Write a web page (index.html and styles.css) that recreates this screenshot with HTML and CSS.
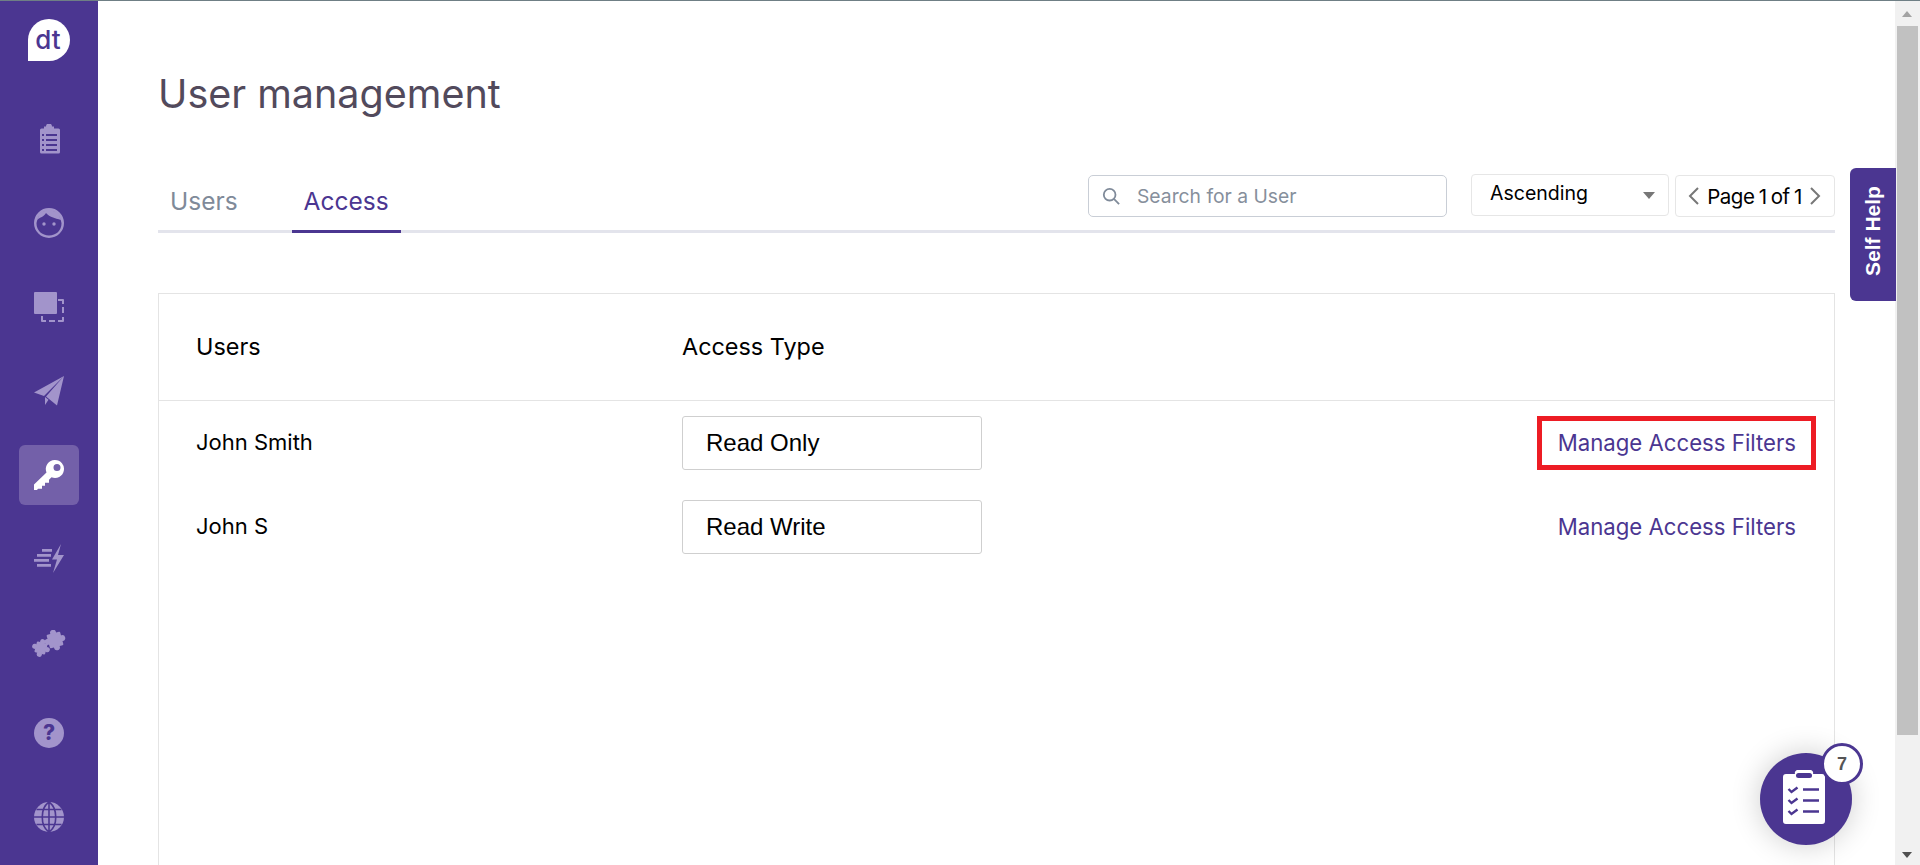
FILE: index.html
```html
<!DOCTYPE html>
<html lang="en">
<head>
<meta charset="utf-8">
<title>User management</title>
<link rel="stylesheet" href="styles.css">
</head>
<body>
<div class="app">
  <nav class="sidebar">
    <div class="logo"><span>dt</span></div>
    <a class="nav-item"><svg class="ico" viewBox="0 0 30 30"><path d="M12 2.500a3 3 0 0 1 6 0h2v2h4.500a1.500 1.500 0 0 1 1.500 1.500v22a1.500 1.500 0 0 1-1.500 1.500h-17a1.500 1.500 0 0 1-1.500-1.500V6a1.500 1.500 0 0 1 1.500-1.500H10v-2z"/><path class="cut" d="M8 10h2v2H8zM12 10h11v2H12zM8 15h2v2H8zM12 15h11v2H12zM8 20h2v2H8zM12 20h11v2H12zM8 25h2v2H8zM12 25h11v2H12z"/></svg></a>
    <a class="nav-item"><svg class="ico" viewBox="0 0 30 30"><path fill-rule="evenodd" d="M15 0a15 15 0 1 1 0 30a15 15 0 0 1 0-30zM15 2.500C9.500 2.500 5 6.500 3.500 11.500c-.5 1.500-1 3-1 4C2.500 22.500 8 27.500 15 27.500S27.500 22.500 27.500 15.500c0-1-.5-2.500-1-4C25 6.500 20.500 2.500 15 2.500z"/><path d="M3 12C6 9 10 9 12 5c3 4 9 5 15 7L24 5 15 1 6 5z"/><circle cx="10" cy="16" r="1.700"/><circle cx="20" cy="16" r="1.700"/></svg></a>
    <a class="nav-item"><svg class="ico" viewBox="0 0 30 30"><rect x="0" y="0" width="23" height="22" rx="1"/><path d="M24 7h5a1 1 0 0 1 1 1v4h-2V9h-4zM28 15h2v6h-2zM7 24h2v4h3v2H8a1 1 0 0 1-1-1zM15 28h6v2h-6zM24 28h4v-3h2v4a1 1 0 0 1-1 1h-5z"/></svg></a>
    <a class="nav-item"><svg class="ico" viewBox="0 0 30 30"><path d="M30 0 0 16.500l10 3.500zM30 0 12 20.500l11 9zM11 21l0 8 3.500-5.200z"/></svg></a>
    <a class="nav-item active"><svg class="ico key" viewBox="0 0 30 30"><path fill-rule="evenodd" d="M21 0a9 9 0 1 1-3.500 17.300L15 19.800v3h-4v3H8v3H4l-1 1.200L0 30v-5.500l12.500-12A9 9 0 0 1 21 0zM23 4a3.500 3.500 0 1 0 0 7a3.500 3.500 0 0 0 0-7z"/></svg></a>
    <a class="nav-item"><svg class="ico" viewBox="0 0 30 30"><path d="M27 0 18 15.500h5L19 29 30 11h-6zM8 5h10v2.800H8zM3 10h14v2.800H3zM0 15h15v2.800H0zM3 20h14v2.800H3z"/></svg></a>
    <a class="nav-item"><svg class="ico puzzle" viewBox="0 0 34 27">
      <g transform="rotate(15 9 18)"><rect x="3.500" y="12.500" width="11" height="11" rx="1"/><circle cx="9" cy="11.500" r="2.600"/><circle cx="9" cy="24.500" r="2.600"/><circle cx="2.500" cy="18" r="2.600"/><circle cx="15.500" cy="18" r="2.600"/></g>
      <g transform="rotate(-15 23 10)"><rect x="16" y="3" width="14" height="14" rx="1"/><circle cx="23" cy="2.500" r="3"/><circle cx="23" cy="17.500" r="3"/><circle cx="15.500" cy="10" r="3"/><circle cx="30.500" cy="10" r="3"/></g>
    </svg></a>
    <a class="nav-item help"><span class="help-dot">?</span></a>
    <a class="nav-item"><svg class="ico" viewBox="0 0 30 30"><circle cx="15" cy="15" r="15"/><path class="line" d="M15 0v30M0 15h30M2.500 7.500h25M2.500 22.500h25M15 0C6 6 6 24 15 30M15 0c9 6 9 24 0 30"/></svg></a>
  </nav>

  <main class="main">
    <h1 class="title">User management</h1>
    <div class="toolbar">
      <div class="tabs">
        <a class="tab">Users</a>
        <a class="tab tab-active">Access</a>
      </div>
      <div class="tools">
        <div class="search">
          <svg class="search-ico" viewBox="0 0 20 20"><circle cx="8.500" cy="8.500" r="6.500"/><path d="M13.500 13.500 19 19"/></svg>
          <span class="placeholder">Search for a User</span>
        </div>
        <div class="sort"><span>Ascending</span><i class="caret"></i></div>
        <div class="pager">
          <svg class="chev" viewBox="0 0 11 18"><path d="M10 1 2 9l8 8"/></svg>
          <span>Page 1 of 1</span>
          <svg class="chev" viewBox="0 0 11 18"><path d="M1 1l8 8-8 8"/></svg>
        </div>
      </div>
    </div>

    <section class="card">
      <div class="card-head">
        <div>Users</div>
        <div>Access Type</div>
      </div>
      <div class="card-body">
        <div class="row">
          <div class="name">John Smith</div>
          <div class="field">Read Only</div>
          <a class="link boxed">Manage Access Filters</a>
        </div>
        <div class="row">
          <div class="name">John S</div>
          <div class="field">Read Write</div>
          <a class="link">Manage Access Filters</a>
        </div>
      </div>
    </section>
  </main>

  <div class="scrollbar">
    <i class="arrow up"></i>
    <div class="thumb"></div>
    <i class="arrow down"></i>
  </div>

  <a class="self-help"><span>Self Help</span></a>

  <a class="fab">
    <svg class="fab-ico" viewBox="0 0 42 54"><path d="M3 4h9a3 3 0 0 1 3-4h12a3 3 0 0 1 3 4h9a3 3 0 0 1 3 3v44a3 3 0 0 1-3 3H3a3 3 0 0 1-3-3V7a3 3 0 0 1 3-3z"/><path class="fab-cut" d="M15.500 5.500h11"/><path class="fab-line" d="M5.500 19l3 3 6-4.500M20 19.500h16M5.500 30l3 3 6-4.500M20 30.500h16M5.500 41l3 3 6-4.500M20 41.500h16"/></svg>
    <span class="badge">7</span>
  </a>
</div>
</body>
</html>
```

FILE: styles.css
```css
* { box-sizing: border-box; }
html, body { margin: 0; height: 100%; overflow: hidden; background: #fff; }
body { font-family: Inter, Lato, sans-serif; color: #000; }
a { cursor: pointer; }

.app { position: relative; display: flex; height: 865px; border-top: 1px solid #6f7f85; overflow: hidden; }

.sidebar { flex: 0 0 98px; background: #4b3691; display: flex; flex-direction: column; align-items: center; padding-top: 18px; }
.logo { width: 42px; height: 42px; flex: none; background: #fff; border-radius: 21px 21px 21px 0; display: flex; align-items: center; justify-content: center; margin-bottom: 48px; padding-right: 2px; }
.logo span { font-size: 26px; font-weight: 500; line-height: 1; color: #4b3691; }
.nav-item { width: 60px; height: 60px; flex: none; display: flex; align-items: center; justify-content: center; margin-bottom: 24px; border-radius: 6px; }
.nav-item.active { background: #7360a9; }
.nav-item.help { margin-top: 6px; }
.ico { width: 30px; height: 30px; fill: #a294cb; display: block; }
.ico .cut { fill: #4b3691; }
.ico .line { fill: none; stroke: #4b3691; stroke-width: 1.600; }
.ico.key { fill: #fff; }
.ico.puzzle { width: 34px; height: 27px; }
.help-dot { width: 30px; height: 30px; border-radius: 50%; background: #a294cb; color: #4b3691; font-weight: 800; font-size: 21px; line-height: 30px; text-align: center; }

.main { flex: 1; min-width: 0; overflow: hidden; padding: 70px 60px 0; }
.title { margin: 0; font-size: 39.500px; line-height: 46px; font-weight: 400; color: #524a5c; }

.toolbar { display: flex; justify-content: space-between; border-bottom: 3px solid #e3e4ec; height: 116px; margin-bottom: 60px; }
.tabs { display: flex; gap: 42px; align-items: flex-end; }
.tab { font-size: 24.500px; line-height: 32px; padding: 0 12px 13px; color: #7f8a99; margin-bottom: -3px; border-bottom: 3px solid transparent; }
.tab-active { color: #4b3691; border-bottom-color: #4b3691; }

.tools { display: flex; align-items: flex-start; padding-top: 58px; }
.search { width: 359px; height: 42px; border: 1px solid #c9ced6; border-radius: 5px; display: flex; align-items: center; padding-left: 13px; margin-right: 24px; }
.search-ico { width: 18px; height: 18px; fill: none; stroke: #7f8a99; stroke-width: 2; margin-right: 17px; }
.placeholder { font-size: 19.300px; color: #868f9c; }
.sort { width: 198px; height: 42px; margin-top: -1px; border: 1px solid #e6e6e6; border-radius: 4px; display: flex; align-items: center; justify-content: space-between; padding: 0 13px 5px 18px; font-size: 19.500px; margin-right: 6px; }
.caret { width: 0; height: 0; border-left: 6px solid transparent; border-right: 6px solid transparent; border-top: 7px solid #777; margin-top: 5px; }
.pager { width: 160px; height: 42px; border: 1px solid #e6e6e6; border-radius: 4px; display: flex; align-items: center; justify-content: space-between; padding: 0 13px 0 12px; font-size: 20.500px; white-space: nowrap; letter-spacing: -.5px; word-spacing: -1px; }
.chev { width: 11px; height: 18px; flex: none; fill: none; stroke: #777; stroke-width: 2; }

.card { height: 700px; border: 1px solid #e4e4e4; }
.card-head { height: 107px; border-bottom: 1px solid #e4e4e4; display: grid; grid-template-columns: 486px 1fr; align-items: center; padding: 0 0 2px 37px; font-size: 23.400px; }
.card-body { display: flex; flex-direction: column; gap: 30px; padding: 15px 18px 0 37px; }
.row { display: grid; grid-template-columns: 486px 300px 1fr; align-items: center; height: 54px; font-size: 22px; }
.name { padding-bottom: 2px; }
.field { height: 54px; border: 1px solid #cfcfcf; border-radius: 3px; padding-left: 23px; font-family: "Liberation Sans", Arial, sans-serif; font-size: 24px; line-height: 52px; }
.link { justify-self: end; color: #4b3691; font-size: 22.200px; line-height: 44px; padding: 0 15px 0 16px; border: 5px solid transparent; white-space: nowrap; }
.boxed { border-color: #ed1c24; }

.scrollbar { flex: 0 0 25px; background: #f1f1f1; display: flex; flex-direction: column; align-items: center; position: relative; padding-top: 25px; }
.thumb { width: 21px; height: 709px; background: #c1c1c1; }
.arrow { position: absolute; left: 7px; width: 0; height: 0; border-left: 5.500px solid transparent; border-right: 5.500px solid transparent; }
.arrow.up { top: 10px; border-bottom: 6px solid #a3a3a3; }
.arrow.down { bottom: 7px; border-top: 6px solid #505050; }

.self-help { position: absolute; left: 1850px; top: 167px; width: 46px; height: 133px; padding-bottom: 8px; background: #4b3691; border-radius: 6px 0 0 6px; display: flex; align-items: center; justify-content: center; }
.self-help span { transform: rotate(-90deg); white-space: nowrap; color: #fff; font-family: "Liberation Sans", Arial, sans-serif; font-weight: 700; font-size: 21px; }

.fab { position: absolute; left: 1760px; top: 752px; width: 92px; height: 92px; padding: 0 4px 4px 0; border-radius: 50%; background: #4b3691; box-shadow: 0 0 30px rgba(0, 0, 0, .2); display: flex; align-items: center; justify-content: center; }
.fab-ico { width: 42px; height: 54px; fill: #fff; }
.fab-cut { fill: none; stroke: #4b3691; stroke-width: 5; stroke-linecap: round; }
.fab-line { fill: none; stroke: #4b3691; stroke-width: 2.400; }
.badge { position: absolute; left: 61px; top: -10px; width: 42px; height: 42px; border-radius: 50%; background: #fff; border: 3px solid #4b3691; color: #555; font-family: "Liberation Sans", Arial, sans-serif; font-weight: 700; font-size: 18px; line-height: 36px; text-align: center; }
```
